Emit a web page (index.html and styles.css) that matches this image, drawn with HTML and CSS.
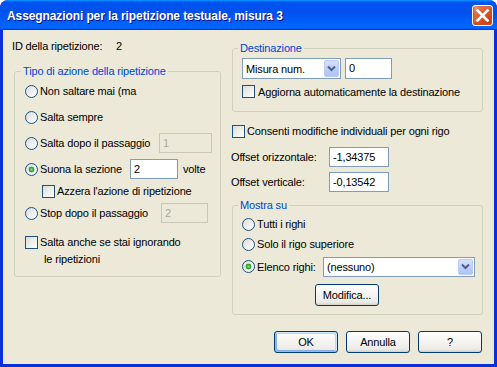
FILE: index.html
```html
<!DOCTYPE html>
<html lang="it">
<head>
    <meta charset="UTF-8">
    <title>Assegnazioni per la ripetizione testuale, misura 3</title>
    <link rel="stylesheet" href="styles.css">
</head>
<body>
    <div class="window">
        <div class="titlebar">
            <span class="title">Assegnazioni per la ripetizione testuale, misura 3</span>
            <div class="close">
                <svg width="19" height="19" viewBox="0 0 19 19"><path d="M4.5 4.5 L14.5 14.5 M14.5 4.5 L4.5 14.5" stroke="#fff" stroke-width="2.6" stroke-linecap="square" fill="none"/></svg>
            </div>
        </div>
        <div class="client">
            <div class="columns">
                <div class="col">
                    <div class="id-row"><span class="id-label">ID della ripetizione:</span><span>2</span></div>
                    <fieldset class="group group-azione">
                        <legend>Tipo di azione della ripetizione</legend>
                        <div class="row"><span class="radio"></span><span>Non saltare mai (ma</span></div>
                        <div class="row"><span class="radio"></span><span>Salta sempre</span></div>
                        <div class="row"><span class="radio"></span><span class="lbl lbl-dopo">Salta dopo il passaggio</span><span class="field disabled w-53">1</span></div>
                        <div class="row"><span class="radio checked"></span><span class="lbl lbl-suona">Suona la sezione</span><span class="field w-48">2</span><span class="volte">volte</span></div>
                        <div class="row row-sub"><span class="check"></span><span>Azzera l'azione di ripetizione</span></div>
                        <div class="row"><span class="radio"></span><span class="lbl lbl-stop">Stop dopo il passaggio</span><span class="field disabled w-47">2</span></div>
                        <div class="row-multi"><span class="check"></span><span class="multi">Salta anche se stai ignorando<br><span class="indent">le ripetizioni</span></span></div>
                    </fieldset>
                </div>
                <div class="col col-right">
                    <fieldset class="group group-dest">
                        <legend>Destinazione</legend>
                        <div class="dest-row">
                            <div class="combo w-99"><span class="combo-text">Misura num.</span><span class="combo-btn"><svg width="9" height="7" viewBox="0 0 9 7"><path d="M1 1.5 L4.5 5 L8 1.5" stroke="#4d6185" stroke-width="2" fill="none"/></svg></span></div>
                            <span class="field w-47 h-21">0</span>
                        </div>
                        <div class="check-row"><span class="check"></span><span>Aggiorna automaticamente la destinazione</span></div>
                    </fieldset>
                    <div class="consenti"><span class="check"></span><span>Consenti modifiche individuali per ogni rigo</span></div>
                    <div class="offset-row"><span class="offset-label">Offset orizzontale:</span><span class="field w-60">-1,34375</span></div>
                    <div class="offset-row second"><span class="offset-label">Offset verticale:</span><span class="field w-60">-0,13542</span></div>
                    <fieldset class="group group-mostra">
                        <legend>Mostra su</legend>
                        <div class="mrow"><span class="radio"></span><span>Tutti i righi</span></div>
                        <div class="mrow"><span class="radio"></span><span>Solo il rigo superiore</span></div>
                        <div class="mrow mrow-list"><span class="radio checked"></span><span class="lbl lbl-elenco">Elenco righi:</span>
                            <div class="combo w-152"><span class="combo-text">(nessuno)</span><span class="combo-btn"><svg width="9" height="7" viewBox="0 0 9 7"><path d="M1 1.5 L4.5 5 L8 1.5" stroke="#4d6185" stroke-width="2" fill="none"/></svg></span></div>
                        </div>
                        <div class="modifica-row"><div class="button">Modifica...</div></div>
                    </fieldset>
                </div>
            </div>
            <div class="actions">
                <div class="button default">OK</div>
                <div class="button">Annulla</div>
                <div class="button">?</div>
            </div>
        </div>
    </div>
</body>
</html>
```

FILE: styles.css
```css
html, body {
    margin: 0;
}
body {
    width: 497px;
    height: 367px;
    overflow: hidden;
    background: #fff;
    font-family: "Liberation Sans", Arial, sans-serif;
    font-size: 11px;
    letter-spacing: -0.15px;
    color: #000;
}
.window {
    width: 497px;
    height: 367px;
    display: flex;
    flex-direction: column;
    background: #0831d9;
    border-radius: 8px 8px 0 0;
    overflow: hidden;
}
.titlebar {
    height: 30px;
    flex: none;
    display: flex;
    align-items: center;
    justify-content: space-between;
    padding: 0 4px 0 7px;
    background: linear-gradient(180deg, #0997ff, #0053ee 8%, #0050ee 40%, #0066ff 88%, #0066ff 93%, #005bff 95%, #003dd7 96%, #003dd7);
}
.title {
    color: #fff;
    font-weight: bold;
    font-size: 12px;
    letter-spacing: -0.1px;
    text-shadow: 1px 1px #0f1089;
    padding-top: 1px;
}
.close {
    width: 21px;
    height: 21px;
    box-sizing: border-box;
    border: 1px solid #fff;
    border-radius: 3px;
    display: flex;
    align-items: center;
    justify-content: center;
    background: radial-gradient(circle at 85% 85%, #c43c12 0%, #dc5a2c 50%, #e2754d 75%, #f3b49a 95%, #ffd8c8 100%);
    box-shadow: inset 0 -1px 2px 1px #d04a10;
}
.client {
    flex: 1;
    margin: 0 3px 3px;
    background: #ece9d8;
    display: flex;
    flex-direction: column;
    padding: 0 11px 11px 9px;
}
.columns {
    display: grid;
    grid-template-columns: 209px 252px;
    column-gap: 10px;
}
.col {
    display: flex;
    flex-direction: column;
}
.id-row {
    display: flex;
    padding-top: 10px;
    line-height: 13px;
}
.id-label {
    width: 104px;
}

/* group boxes */
.group {
    margin: 0;
    border: 1px solid #d0d0bf;
    border-radius: 3px;
    min-width: 0;
}
.group legend {
    color: #0046d5;
    padding: 0 2px;
    line-height: 13px;
}
.group-azione {
    margin: 12px 0 0 2px;
    padding: 0 0 8px 6px;
}
.group-dest {
    margin: 12px 0 0 1px;
    padding: 0 0 11px 5px;
}
.group-mostra {
    margin: 7px 0 0 1px;
    padding: 0 0 8px 5px;
}

/* controls */
.radio, .check {
    flex: none;
    width: 13px;
    height: 13px;
    box-sizing: border-box;
    border: 1px solid #1c5180;
    background: linear-gradient(135deg, #dcdcd7, #fff);
}
.radio {
    border-radius: 50%;
    margin-right: 2px;
}
.radio.checked {
    background: radial-gradient(circle, #8ee58a 0, #29a829 2px, #21a121 2.6px, transparent 3.2px), linear-gradient(135deg, #dcdcd7, #fff);
}
.check {
    margin-right: 2px;
}
.field {
    box-sizing: border-box;
    height: 20px;
    border: 1px solid #7f9db9;
    background: #fff;
    padding: 0 3px;
    line-height: 18px;
    flex: none;
}
.field.disabled {
    background: #ece9d8;
    border-color: #c9c7ba;
    color: #aca899;
}
.h-21 {
    height: 21px;
    line-height: 19px;
}
.w-47 { width: 47px; }
.w-48 { width: 48px; }
.w-53 { width: 53px; }
.w-60 { width: 60px; }
.w-99 { width: 99px; }
.w-152 { width: 152px; }

.combo {
    box-sizing: border-box;
    height: 21px;
    border: 1px solid #7f9db9;
    background: #fff;
    display: flex;
    align-items: center;
    justify-content: space-between;
    padding: 1px;
    flex: none;
}
.combo-text {
    padding-left: 2px;
}
.combo-btn {
    width: 15px;
    height: 100%;
    box-sizing: border-box;
    border: 1px solid #bccbf3;
    border-radius: 2px;
    background: linear-gradient(180deg, #d5e1fc, #b9cdf8 60%, #aec4f4);
    display: flex;
    align-items: center;
    justify-content: center;
}
.w-152 {
    height: 20px;
}

.button {
    box-sizing: border-box;
    width: 64px;
    height: 22px;
    border: 1px solid #003c74;
    border-radius: 3px;
    background: linear-gradient(180deg, #fff, #ecebe6 86%, #d6d0c5);
    display: flex;
    align-items: center;
    justify-content: center;
}
.button.default {
    box-shadow: inset -1px 1px #cee7ff, inset 1px -1px #98b8ea, inset -2px 2px #bcd4f6, inset 2px -2px #89ade4;
}

/* left group rows */
.row {
    display: flex;
    align-items: center;
    height: 26px;
    padding-left: 4px;
}
.lbl-dopo { width: 119px; }
.lbl-suona { width: 90px; }
.lbl-stop { width: 121px; }
.volte {
    margin-left: 5px;
}
.row-sub {
    height: 18px;
    padding-left: 21px;
}
.row-multi {
    display: flex;
    align-items: flex-start;
    margin-top: 8px;
    padding-left: 4px;
    line-height: 17px;
}
.row-multi .check {
    margin-top: 2px;
}
.indent {
    padding-left: 4px;
}

/* right column */
.dest-row {
    display: flex;
    gap: 4px;
    margin: 3px 0 0 4px;
}
.check-row {
    display: flex;
    align-items: center;
    height: 17px;
    margin: 4px 0 0 4px;
}
.check-row .check {
    margin-right: 3px;
}
.consenti {
    display: flex;
    align-items: center;
    height: 14px;
    margin: 12px 0 0 1px;
}
.offset-row {
    display: flex;
    align-items: center;
    margin-top: 9px;
}
.offset-row.second {
    margin-top: 5px;
}
.offset-label {
    width: 98px;
}
.mrow {
    display: flex;
    align-items: center;
    height: 20px;
    margin: 2px 0 0 4px;
}
.mrow + .mrow {
    margin-top: 0;
}
.mrow-list {
    height: 21px;
    margin-top: 2px !important;
}
.lbl-elenco { width: 66px; }
.modifica-row {
    display: flex;
    margin: 7px 0 0 77px;
}
.actions {
    margin-top: auto;
    display: flex;
    justify-content: flex-end;
    gap: 8px;
    margin-right: 1px;
}
```
